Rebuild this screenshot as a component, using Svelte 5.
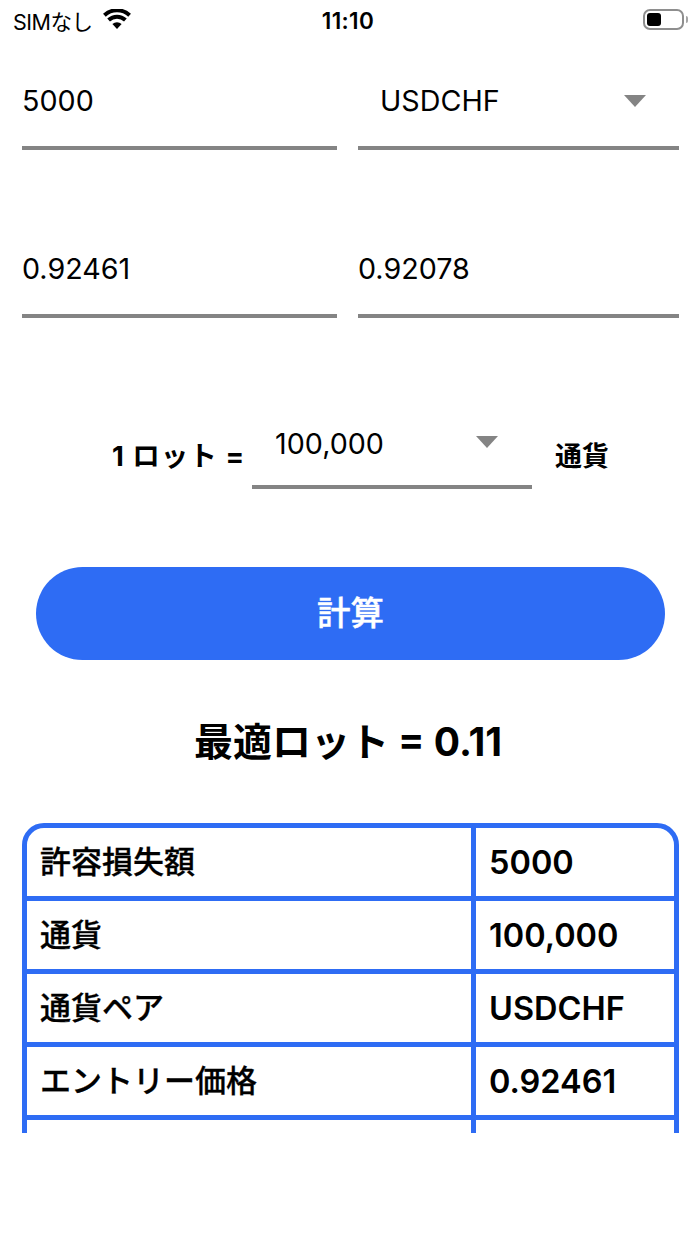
<script lang="ts">
	const rows = [
		['許容損失額', '5000'],
		['通貨', '100,000'],
		['通貨ペア', 'USDCHF'],
		['エントリー価格', '0.92461'],
		['', '']
	];
</script>

<div class="page">
	<header class="status">
		<div class="status-left">
			<span>SIMなし</span>
			<svg class="wifi" width="28" height="20" viewBox="0 0 28 20">
				<path d="M14 20 9.4 15a7 7 0 0 1 9.2 0Z" fill="#000" />
				<path d="M5.6 11a12.4 12.4 0 0 1 16.8 0" fill="none" stroke="#000" stroke-width="4" />
				<path d="M1.4 6.2a18.6 18.6 0 0 1 25.2 0" fill="none" stroke="#000" stroke-width="4" />
			</svg>
		</div>
		<span class="clock">11:10</span>
		<div class="battery"><i class="level"></i><i class="cap"></i></div>
	</header>

	<section class="fields">
		<div class="field"><span>5000</span></div>
		<div class="field select">
			<span>USDCHF</span>
			<i class="arrow"></i>
		</div>
	</section>

	<section class="fields second">
		<div class="field"><span>0.92461</span></div>
		<div class="field"><span>0.92078</span></div>
	</section>

	<section class="lot">
		<span class="lot-label">1 ロット =</span>
		<div class="lot-select">
			<span>100,000</span>
			<i class="arrow"></i>
		</div>
		<span class="lot-unit">通貨</span>
	</section>

	<button class="calc"><span>計算</span></button>

	<h2 class="result">最適ロット = 0.11</h2>

	<div class="table-clip">
		<table>
			<tbody>
				{#each rows as row}
					<tr>
						<th>{row[0]}</th>
						<td>{row[1]}</td>
					</tr>
				{/each}
			</tbody>
		</table>
	</div>
</div>

<style>
	:global(body) {
		margin: 0;
		background: #fff;
	}

	.page {
		width: 700px;
		height: 1244px;
		overflow: hidden;
		color: #000;
		font-family: Inter, "Noto Sans CJK JP", sans-serif;
	}

	.status {
		height: 40px;
		padding: 0 16px 0 13px;
		display: grid;
		grid-template-columns: 1fr auto 1fr;
		align-items: center;
	}

	.status-left {
		display: flex;
		align-items: center;
		gap: 10px;
		font-size: 21.5px;
		letter-spacing: -0.5px;
	}

	.wifi {
		margin-top: -3px;
	}

	.clock {
		font-size: 22.5px;
		font-weight: 600;
		letter-spacing: 0.4px;
		margin-left: -1px;
	}

	.battery {
		justify-self: end;
		position: relative;
		width: 41px;
		height: 21px;
		margin-top: -2px;
		border: 2px solid #8e8e8e;
		border-radius: 7px;
		box-sizing: border-box;
		padding: 2px;
	}

	.level {
		display: block;
		width: 14px;
		height: 100%;
		background: #000;
		border-radius: 3px;
	}

	.cap {
		position: absolute;
		right: -6px;
		top: 5px;
		width: 2px;
		height: 7px;
		background: #a5a5a5;
		border-radius: 0 2px 2px 0;
	}

	.fields {
		margin: 10px 21px 0 22px;
		display: grid;
		grid-template-columns: 315px 321px;
		gap: 21px;
	}

	.fields.second {
		margin-top: 68px;
	}

	.field {
		height: 100px;
		box-sizing: border-box;
		border-bottom: 4px solid #848484;
		display: flex;
		align-items: center;
		justify-content: space-between;
		font-size: 28.7px;
		padding-top: 5px;
	}

	.field.select {
		padding-left: 22px;
		padding-right: 33px;
	}

	.arrow {
		display: block;
		width: 0;
		height: 0;
		border-left: 11.5px solid transparent;
		border-right: 11.5px solid transparent;
		border-top: 12px solid #848484;
	}

	.lot {
		margin-top: 94px;
		display: flex;
		align-items: flex-end;
		padding-left: 112px;
	}

	.lot-label {
		font-size: 27.5px;
		font-weight: 700;
		letter-spacing: 1px;
		width: 140px;
		margin-bottom: 15px;
		white-space: nowrap;
	}

	.lot-select {
		width: 280px;
		height: 77px;
		box-sizing: border-box;
		border-bottom: 4px solid #848484;
		display: flex;
		justify-content: space-between;
		align-items: flex-start;
		padding: 14px 34px 0 23px;
		font-size: 28.7px;
	}

	.lot-select .arrow {
		margin-top: 10px;
	}

	.lot-unit {
		margin: 0 0 15px 23px;
		font-size: 27px;
		font-weight: 700;
	}

	.calc {
		display: block;
		width: 629px;
		height: 93px;
		margin: 78px 0 0 36px;
		padding: 0 0 7px;
		border: none;
		border-radius: 47px;
		background: #2e6cf4;
		color: #fff;
		font: 500 33.5px Inter, "Noto Sans CJK JP", sans-serif;
		-webkit-text-stroke: 0.4px #fff;
	}

	.result {
		margin: 54px 4px 0 0;
		height: 56px;
		line-height: 56px;
		text-align: center;
		font-size: 39px;
		font-weight: 700;
	}

	.table-clip {
		margin: 53px 21px 0 22px;
		height: 310px;
		overflow: hidden;
	}

	table {
		width: 100%;
		table-layout: fixed;
		border-collapse: separate;
		border-spacing: 0;
		border: 5px solid #2e6cf4;
		border-radius: 22px;
		box-sizing: border-box;
	}

	tr {
		height: 73px;
	}

	th, td {
		padding: 0 0 0 13px;
		box-sizing: border-box;
		border-bottom: 5px solid #2e6cf4;
		text-align: left;
	}

	th {
		width: 449px;
		padding-bottom: 5px;
		font-size: 31px;
		font-weight: 500;
		-webkit-text-stroke: 0.3px #000;
		border-right: 5px solid #2e6cf4;
	}

	td {
		font-weight: 600;
		font-size: 32.5px;
	}
</style>
